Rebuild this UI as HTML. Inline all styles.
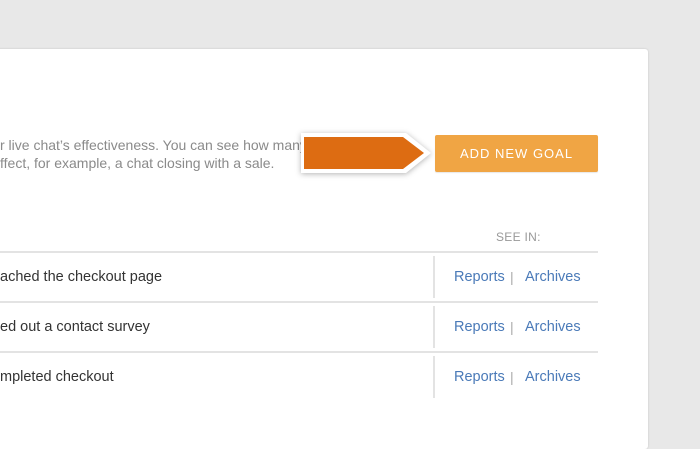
<!DOCTYPE html>
<html><head><meta charset="utf-8"><style>
body{margin:0;width:700px;height:400px;background:#e8e8e8;overflow:hidden;position:relative;font-family:"Liberation Sans",sans-serif}
.panel{position:absolute;left:-10px;top:49px;width:658px;height:400px;background:#fff;border-radius:3px;box-shadow:0 0 2px rgba(0,0,0,.15)}
.t{position:absolute;white-space:nowrap}
.desc{color:#8a8a8a;font-size:14px;left:0}
.btn{position:absolute;left:435px;top:135px;width:163px;height:37px;background:#f0a544;border-radius:2px;color:#fff;font-size:13px;letter-spacing:1px;text-align:center;line-height:37px;box-shadow:0 1px 1px rgba(0,0,0,.1)}
.hr{position:absolute;left:0;width:598px;height:2px;background:#e3e3e3}
.vr{position:absolute;left:433px;width:2px;height:42px;background:#e3e3e3}
.row{font-size:14.5px;color:#333;left:0}
.lnk{font-size:14.5px;color:#4a7ab8}
.sep{color:#aaa;font-size:14px;left:510px}
</style></head><body>
<div class="panel"></div>
<div class="t desc" style="top:137px">r live chat’s effectiveness. You can see how many</div>
<div class="t desc" style="top:155px">ffect, for example, a chat closing with a sale.</div>
<svg style="position:absolute;left:292px;top:126px;filter:drop-shadow(0 1px 3px rgba(0,0,0,.3))" width="150" height="60">
<polygon points="9,7 114,7 139,27 114,47 9,47" fill="#fff"/>
<polygon points="12,11 111,11 132,27 111,43 12,43" fill="#dd6c12"/>
</svg>
<div class="btn">ADD NEW GOAL</div>
<div class="t" style="left:496px;top:230px;font-size:12px;color:#999;letter-spacing:.3px">SEE IN:</div>
<div class="hr" style="top:251px"></div>
<div class="hr" style="top:301px"></div>
<div class="hr" style="top:351px"></div>
<div class="vr" style="top:256px"></div>
<div class="vr" style="top:306px"></div>
<div class="vr" style="top:356px"></div>
<div class="t row" style="top:269px">ached the checkout page</div>
<div class="t row" style="top:319px">ed out a contact survey</div>
<div class="t row" style="top:369px">mpleted checkout</div>
<div class="t lnk" style="left:454px;top:269px">Reports</div><div class="t sep" style="top:269px">|</div><div class="t lnk" style="left:525px;top:269px">Archives</div>
<div class="t lnk" style="left:454px;top:319px">Reports</div><div class="t sep" style="top:319px">|</div><div class="t lnk" style="left:525px;top:319px">Archives</div>
<div class="t lnk" style="left:454px;top:369px">Reports</div><div class="t sep" style="top:369px">|</div><div class="t lnk" style="left:525px;top:369px">Archives</div>
</body></html>
